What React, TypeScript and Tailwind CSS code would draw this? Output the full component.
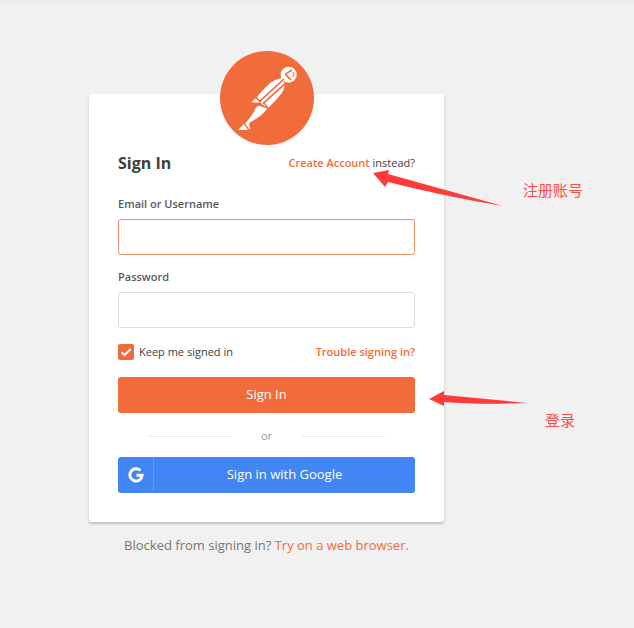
import { useState, type ReactNode } from "react";

function MascotLogo() {
  return (
    <svg viewBox="28 18 282 282" className="size-[94px]" role="img" aria-label="Postman">
      <circle cx="169" cy="159" r="141" fill="#f26b3a" />
      <g transform="translate(60 45)">
        <g fill="#fff">
          <circle cx="174" cy="44" r="24" />
          <path d="M153 54 Q134 57 118 69 Q98 87 78 112 L62 127 L90 128 L97 135 L113 143 Q137 121 154 98 Q163 86 162 70Z" />
          <path d="M80 138 L92 136 L112 144 Q99 160 86 170 L56 189 Q54 196 59 206 L54 208 L42 191 Q60 174 70 155 Q74 144 80 138Z" />
          <path d="M22 209 L42 190 L52 208 L50 210Z" />
        </g>
        <g fill="none" stroke="#f26b3a">
          <path d="M164 43 L184 30 M164 43 L181 60" strokeWidth="5" />
          <path d="M187 36 Q194 43 186 51" strokeWidth="3" />
          <path d="M160 57 L87 124 M164 70 L97 131" strokeWidth="5" />
          <path d="M75 111 L90 127" strokeWidth="5" />
          <path d="M80 134 L98 139 L116 147 M98 127 L112 143" strokeWidth="4" />
          <path d="M40 189 L55 210" strokeWidth="4" />
        </g>
      </g>
    </svg>
  );
}

function GoogleMark() {
  return (
    <svg viewBox="0 0 24 24" className="size-4" fill="none" stroke="#fff" strokeWidth="4.4" aria-hidden="true">
      <path d="M18.6 5.4 A9.2 9.2 0 1 0 21.2 12.4 H12.5" />
    </svg>
  );
}

function Field({ id, label, type, active }: { id: string; label: string; type: string; active?: boolean }) {
  return (
    <div className="flex flex-col gap-[7px]">
      <label htmlFor={id} className="text-[11px] leading-4 font-semibold text-[#5a5a5a]">
        {label}
      </label>
      <input
        id={id}
        type={type}
        className={
          "h-9 w-full rounded-[3px] border bg-white px-3 text-sm outline-none " +
          (active ? "border-[#f58e69]" : "border-[#dcdcdc]")
        }
      />
    </div>
  );
}

function Note({ className, children }: { className: string; children: ReactNode }) {
  return (
    <p className={"absolute font-['Noto_Sans_CJK_SC',sans-serif] text-[15px] leading-5 whitespace-nowrap text-[#ff4a4a] " + className}>
      {children}
    </p>
  );
}

export default function App() {
  const [keep, setKeep] = useState(true);
  return (
    <div className="relative min-h-screen overflow-hidden border-t-4 border-[#eeeeee] bg-[#f1f1f1] pt-[47px] pr-4 pl-[89px] font-['Open_Sans',sans-serif] text-[#404040]">
      <main className="w-full max-w-[355px]">
        <div className="relative z-10 -mb-[51px] flex justify-center">
          <MascotLogo />
        </div>
        <section className="rounded-[3px] bg-white px-[29px] pt-[57px] pb-[29px] shadow-[0_2px_3px_rgba(0,0,0,0.22)]">
          <header className="mb-[21px] flex h-6 items-center justify-between">
            <h1 className="text-base leading-6 font-bold">Sign In</h1>
            <p className="text-[11px] leading-4">
              <a href="#create" className="font-semibold text-[#f26b3a]">Create Account</a> instead?
            </p>
          </header>
          <form onSubmit={(e) => e.preventDefault()}>
            <div className="flex flex-col gap-3.5">
              <Field id="username" label="Email or Username" type="text" active />
              <Field id="password" label="Password" type="password" />
            </div>
            <div className="mt-4 flex h-4 items-center justify-between text-[11px] leading-4">
              <label className="flex items-center gap-[5px]">
                <span className="relative flex size-4">
                  <input
                    type="checkbox"
                    checked={keep}
                    onChange={(e) => setKeep(e.target.checked)}
                    className="peer size-4 appearance-none rounded-xs border border-[#f26b3a] checked:bg-[#f26b3a]"
                  />
                  <svg viewBox="0 0 16 16" className="pointer-events-none absolute inset-0 hidden size-4 peer-checked:block" fill="none" stroke="#fff" strokeWidth="2" aria-hidden="true">
                    <path d="M3.5 8.2 L6.5 11 L12.7 5" />
                  </svg>
                </span>
                Keep me signed in
              </label>
              <a href="#trouble" className="font-semibold text-[#f26b3a]">Trouble signing in?</a>
            </div>
            <button type="submit" className="mt-[17px] h-9 w-full rounded-[3px] bg-[#f26b3a] text-[13px] text-white">
              Sign In
            </button>
            <div className="mt-[15px] flex h-4 items-center justify-center gap-[29px] text-[11px] leading-4 text-[#999999]">
              <span className="h-px w-[84px] bg-[#eeeeee]" />
              or
              <span className="h-px w-[84px] bg-[#eeeeee]" />
            </div>
            <button type="button" className="mt-[13px] flex h-9 w-full items-center rounded-[3px] bg-[#4285f4] text-[13px] text-white">
              <span className="flex h-full w-9 items-center justify-center border-r border-[#6199f6]">
                <GoogleMark />
              </span>
              <span className="flex-1">Sign in with Google</span>
            </button>
          </form>
        </section>
        <p className="mt-[13px] text-center text-[13px] leading-5 text-[#777777]">
          Blocked from signing in? <a href="#web" className="text-[#f26b3a]">Try on a web browser.</a>
        </p>
      </main>
      <svg viewBox="0 0 130 38" className="pointer-events-none absolute top-[165px] left-[373px] z-20 h-[38px] w-[130px]" aria-hidden="true">
        <path d="M0 4 L16 1 L15 5 L130 37 Q70 27 15 13 L12 18Z" fill="#ff3a3a" />
      </svg>
      <svg viewBox="0 0 98 16" className="pointer-events-none absolute top-[387px] left-[429px] z-20 h-4 w-[98px]" aria-hidden="true">
        <path d="M0 8 L15 0 L15 4 L98 12 Q50 14 15 11 L15 15Z" fill="#ff3a3a" />
      </svg>
      <Note className="top-[176px] left-[523px]">注册账号</Note>
      <Note className="top-[406px] left-[545px]">登录</Note>
    </div>
  );
}
